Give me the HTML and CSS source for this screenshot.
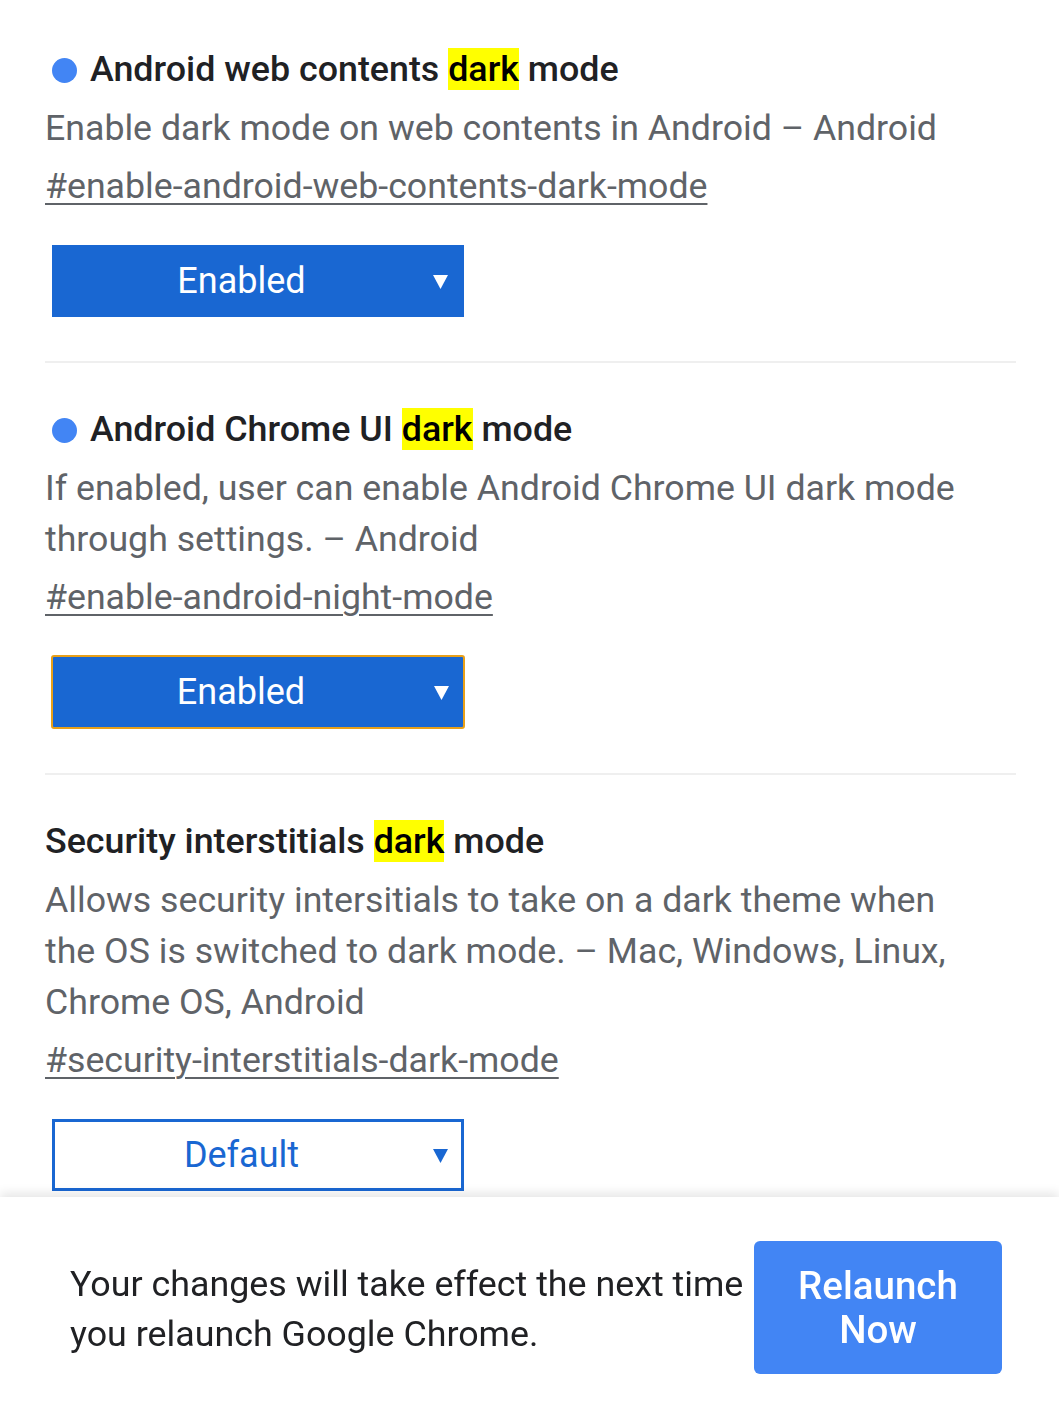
FILE: index.html
```html
<!DOCTYPE html>
<html lang="en">

<head>
    <meta charset="UTF-8">
    <meta name="viewport" content="width=device-width, initial-scale=1.0">
    <title>Flags</title>
    <link rel="stylesheet" href="styles.css">
</head>

<body>
    <div class="container">
        <div class="flag">
            <h3 class="flag-name"><span class="dot"></span>Android web contents <mark>dark</mark> mode</h3>
            <p class="flag-desc">Enable dark mode on web contents in Android – Android</p>
            <a class="flag-link" href="#enable-android-web-contents-dark-mode">#enable-android-web-contents-dark-mode</a>
            <div class="select enabled">
                <span class="select-text">Enabled</span>
                <svg class="arrow" width="15" height="15" viewBox="0 0 15 15"><polygon points="0,1 15,1 7.5,15" fill="currentColor"/></svg>
            </div>
        </div>

        <div class="flag">
            <h3 class="flag-name"><span class="dot"></span>Android Chrome UI <mark>dark</mark> mode</h3>
            <p class="flag-desc">If enabled, user can enable Android Chrome UI dark mode through settings. – Android</p>
            <a class="flag-link" href="#enable-android-night-mode">#enable-android-night-mode</a>
            <div class="select enabled focused">
                <span class="select-text">Enabled</span>
                <svg class="arrow" width="15" height="15" viewBox="0 0 15 15"><polygon points="0,1 15,1 7.5,15" fill="currentColor"/></svg>
            </div>
        </div>

        <div class="flag">
            <h3 class="flag-name">Security interstitials <mark>dark</mark> mode</h3>
            <p class="flag-desc">Allows security intersitials to take on a dark theme when the OS is switched to dark mode. – Mac, Windows, Linux, Chrome OS, Android</p>
            <a class="flag-link" href="#security-interstitials-dark-mode">#security-interstitials-dark-mode</a>
            <div class="select">
                <span class="select-text">Default</span>
                <svg class="arrow" width="15" height="15" viewBox="0 0 15 15"><polygon points="0,1 15,1 7.5,15" fill="currentColor"/></svg>
            </div>
        </div>
    </div>

    <div class="footer">
        <p class="footer-text">Your changes will take effect the next time you relaunch Google Chrome.</p>
        <button class="relaunch">Relaunch Now</button>
    </div>
</body>

</html>
```

FILE: styles.css
```css
body {
    margin: 0px;
    padding: 0px;
    background-color: white;
    font-family: Roboto, "Liberation Sans", sans-serif;
    color: #202124;
}

.container {
    padding: 3px 43px 0px 45px;
}

.flag {
    padding: 44px 0px 44px 0px;
    border-bottom: 2px solid #efefef;
}

.flag-name {
    margin: 0px;
    font-size: 35.8px;
    font-weight: 500;
    line-height: 44px;
}

.dot {
    display: inline-block;
    width: 25px;
    height: 25px;
    border-radius: 50%;
    background-color: #4285f4;
    margin-left: 7px;
    margin-right: 13px;
    vertical-align: -2px;
}

mark {
    background-color: #ffff00;
    color: #000;
}

.flag-desc {
    margin: 12px 0px 0px 0px;
    font-size: 35.7px;
    line-height: 51px;
    color: #5f6368;
    padding-right: 30px;
}

.flag-link {
    display: inline-block;
    margin-top: 7px;
    font-size: 35.7px;
    line-height: 51px;
    color: #5f6368;
    text-decoration-thickness: 2px;
    text-underline-offset: 5px;
}

.select {
    box-sizing: border-box;
    width: 412px;
    height: 72px;
    margin: 33px 0px 0px 7px;
    border: 3px solid #1967d2;
    background-color: white;
    color: #1967d2;
    display: flex;
    align-items: center;
    font-size: 36px;
}

.select-text {
    flex: 1;
    text-align: center;
}

.arrow {
    margin: 0px 13px 0px 5px;
}

.select.enabled {
    background-color: #1967d2;
    color: white;
}

.select.focused {
    width: 414px;
    height: 74px;
    margin-top: 32px;
    margin-left: 6px;
    border: 2px solid #e8a019;
    border-radius: 3px;
}

.select.focused .arrow {
    margin-right: 14px;
}

.footer {
    position: fixed;
    left: 0px;
    right: 0px;
    bottom: 0px;
    height: 221px;
    background-color: white;
    box-shadow: 0px -4px 10px rgba(0, 0, 0, 0.1);
    display: flex;
    align-items: center;
    padding: 0px 57px 0px 70px;
    box-sizing: border-box;
}

.footer-text {
    flex: 1;
    margin: 0px;
    font-size: 35.8px;
    line-height: 50px;
    color: #202124;
    padding-top: 2px;
}

.relaunch {
    width: 248px;
    height: 133px;
    border: none;
    border-radius: 6px;
    background-color: #4285f4;
    color: white;
    font-family: Roboto, "Liberation Sans", sans-serif;
    font-size: 38.5px;
    font-weight: 500;
    line-height: 44px;
    padding: 0px 20px;
}
```
